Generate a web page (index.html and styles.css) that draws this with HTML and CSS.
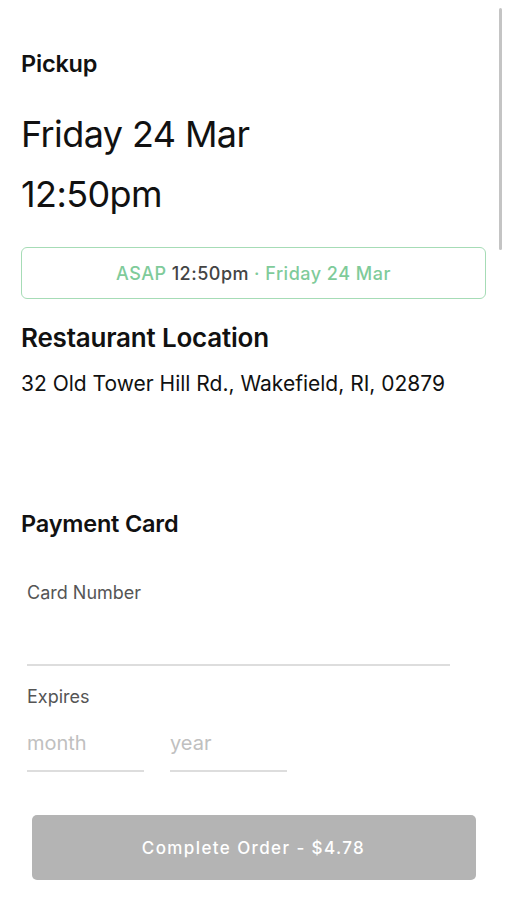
FILE: index.html
```html
<!DOCTYPE html>
<html lang="en">

<head>
    <meta charset="UTF-8">
    <meta name="viewport" content="width=device-width, initial-scale=1.0">
    <title>Checkout</title>
    <link rel="stylesheet" href="styles.css">
</head>

<body>
    <div class="scroll-indicator"></div>

    <div class="container">
        <h2 class="section-title pickup-title">Pickup</h2>
        <div class="big-line">Friday 24 Mar</div>
        <div class="big-line">12:50pm</div>

        <div class="asap-box">
            <span class="green">ASAP</span> <span class="time">12:50pm</span> <span class="green">· Friday 24 Mar</span>
        </div>

        <h2 class="section-title location-title">Restaurant Location</h2>
        <p class="address">32 Old Tower Hill Rd., Wakefield, RI, 02879</p>

        <h2 class="section-title payment-title">Payment Card</h2>

        <div class="card-form">
            <label class="field-label" for="card-number">Card Number</label>
            <input type="text" id="card-number" class="field-input card-number">

            <label class="field-label expires-label">Expires</label>
            <div class="expires-row">
                <input type="text" class="field-input small" placeholder="month">
                <input type="text" class="field-input small" placeholder="year">
            </div>
        </div>

        <button class="order-button">Complete Order - $4.78</button>
    </div>
</body>

</html>
```

FILE: styles.css
```css
body {
    margin: 0;
    font-family: Inter, "Noto Sans", sans-serif;
    background-color: white;
    color: #111;
}

.scroll-indicator {
    position: absolute;
    top: 8px;
    right: 5px;
    width: 3px;
    height: 242px;
    border-radius: 2px;
    background-color: #c4c4c4;
}

.container {
    padding: 50px 21px 0 21px;
}

.section-title {
    font-size: 23.5px;
    font-weight: 600;
    line-height: 28px;
    margin: 0;
    letter-spacing: -0.2px;
}

.pickup-title {
    margin-bottom: 26px;
}

.big-line {
    font-size: 36px;
    line-height: 60px;
    letter-spacing: -0.6px;
}

.asap-box {
    margin-top: 23px;
    border: 1.5px solid #a6dcb6;
    border-radius: 6px;
    height: 50px;
    display: flex;
    justify-content: center;
    align-items: center;
    gap: 5px;
    font-size: 18px;
    font-weight: 500;
    letter-spacing: 0.5px;
}

.asap-box .green {
    color: #7fcb9a;
}

.asap-box .time {
    color: #444;
}

.location-title {
    margin-top: 23px;
    font-size: 26px;
    line-height: 32px;
}

.address {
    margin: 17px 0 0 0;
    font-size: 21px;
    line-height: 26px;
}

.payment-title {
    margin-top: 113px;
}

.card-form {
    padding: 0 0 0 6px;
    width: 423px;
}

.field-label {
    display: block;
    font-size: 18px;
    color: #555;
    margin-top: 44px;
}

.field-input {
    display: block;
    box-sizing: border-box;
    border: none;
    border-bottom: 2px solid #ddd;
    font-family: inherit;
    font-size: 20px;
    padding: 0;
    outline: none;
    background: transparent;
}

.field-input::placeholder {
    color: #c0c0c0;
}

.card-number {
    width: 100%;
    height: 63px;
}

.expires-label {
    margin-top: 20px;
}

.expires-row {
    display: flex;
    gap: 26px;
    margin-top: 8px;
}

.field-input.small {
    width: 117px;
    height: 57px;
}

.order-button {
    display: block;
    margin: 43px auto 0 auto;
    width: 444px;
    height: 65px;
    border: none;
    border-radius: 5px;
    background-color: #b4b4b4;
    color: white;
    font-family: inherit;
    font-size: 17px;
    font-weight: 500;
    letter-spacing: 1.4px;
}
```
